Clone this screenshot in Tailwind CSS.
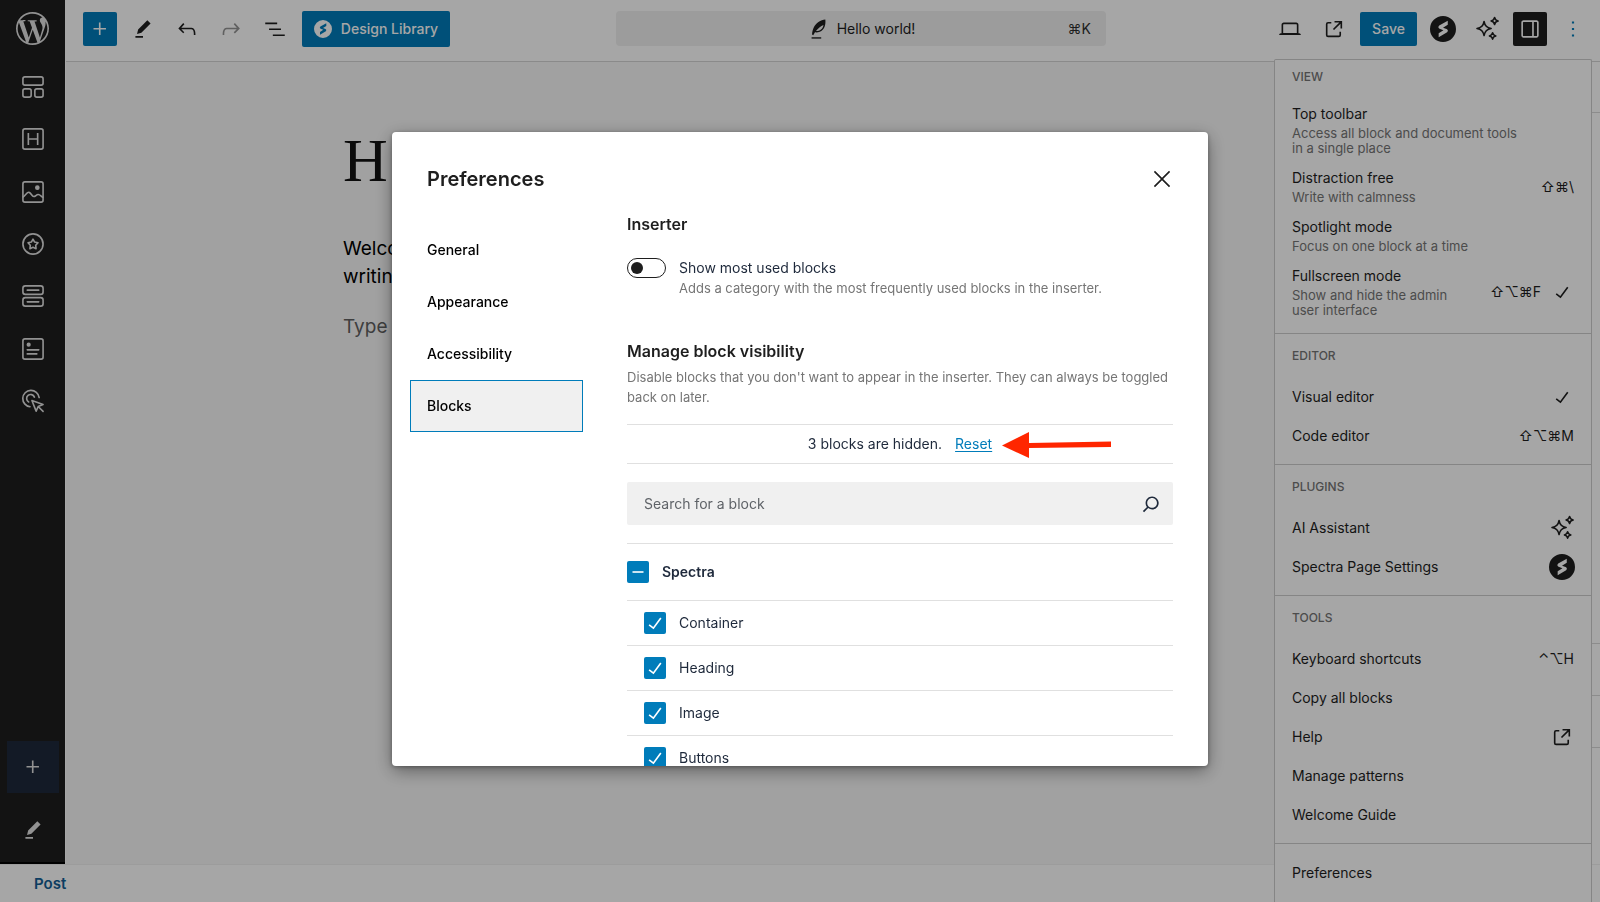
<!DOCTYPE html>
<html lang="en">
<head>
<meta charset="utf-8">
<title>Hello world! – Edit Post</title>
<script src="https://cdn.jsdelivr.net/npm/@tailwindcss/browser@4"></script>
</head>
<body class="h-screen overflow-hidden bg-white font-['Inter','DejaVu_Sans',sans-serif] text-sm text-[#1e1e1e]">

<svg class="hidden" aria-hidden="true">
  <symbol id="plus" viewBox="0 0 24 24"><path d="M11 12.5V17.5H12.5V12.5H17.5V11H12.5V6H11V11H6V12.5H11Z"/></symbol>
  <symbol id="pencil" viewBox="0 0 24 24"><path d="m19 7-3-3-8.5 8.5-1 4 4-1L19 7Zm-7 11.5H5V20h7v-1.5Z"/></symbol>
  <symbol id="external" viewBox="0 0 24 24"><path d="M19.5 4.5h-7V6h4.44l-5.97 5.97 1.06 1.06L18 7.06v4.44h1.5v-7Zm-13 1a2 2 0 0 0-2 2v10a2 2 0 0 0 2 2h10a2 2 0 0 0 2-2v-3H17v3a.5.5 0 0 1-.5.5h-10a.5.5 0 0 1-.5-.5v-10a.5.5 0 0 1 .5-.5h3V5.5h-3Z"/></symbol>
  <symbol id="check" viewBox="0 0 24 24"><path d="M16.7 7.1l-6.3 8.5-3.3-2.5-.9 1.2 4.5 3.4L17.9 8z"/></symbol>
  <symbol id="spectra" viewBox="0 0 24 24"><path fill-rule="evenodd" d="M12 0a12 12 0 1 0 0 24 12 12 0 0 0 0-24ZM16.4 4.3v3.8l-4.4 2.7 3.4 1.3q2 1.1.4 2.9L8 19.7v-3.8l4.4-2.8-3.6-1.4q-2-1.1-.3-2.9Z"/></symbol>
  <symbol id="sparkles" viewBox="0 0 24 24"><path fill="none" stroke="currentColor" stroke-width="1.5" stroke-linejoin="round" d="M8.7 5.2Q9.6 11.1 15.5 12 9.6 12.9 8.7 18.8 7.8 12.9 1.9 12 7.8 11.1 8.7 5.2ZM18.8 1.4Q19.3 4.3 22.2 4.8 19.3 5.3 18.8 8.2 18.3 5.3 15.4 4.8 18.3 4.3 18.8 1.4ZM16.9 16Q17.4 18.6 20 19.1 17.4 19.6 16.9 22.2 16.4 19.6 13.8 19.1 16.4 18.6 16.9 16Z"/></symbol>
</svg>

<div class="flex h-full flex-col">
  <div class="flex min-h-0 flex-1">

    <aside class="flex w-[65px] shrink-0 flex-col items-center border-b-2 border-black bg-[#1e1e1e] text-[#e0e0e0]">
      <a href="#" aria-label="View posts" class="flex h-14 w-full items-center justify-center">
        <svg class="size-[33px]" viewBox="0 0 24 24" fill="currentColor"><path d="M21.469 6.825c.84 1.537 1.318 3.3 1.318 5.175 0 3.979-2.156 7.456-5.363 9.325l3.295-9.527c.615-1.54.82-2.771.82-3.864 0-.405-.026-.78-.07-1.11m-7.981.105c.647-.03 1.232-.105 1.232-.105.582-.075.514-.93-.067-.899 0 0-1.755.135-2.88.135-1.064 0-2.85-.15-2.85-.15-.585-.03-.661.855-.075.885 0 0 .54.061 1.125.09l1.68 4.605-2.37 7.08L5.354 6.9c.649-.03 1.234-.1 1.234-.1.585-.075.516-.93-.065-.896 0 0-1.746.138-2.874.138-.2 0-.438-.008-.69-.015C4.911 3.15 8.235 1.215 12 1.215c2.809 0 5.365 1.072 7.286 2.833-.046-.003-.091-.009-.141-.009-1.06 0-1.812.923-1.812 1.914 0 .89.513 1.643 1.06 2.531.411.72.89 1.643.89 2.977 0 .915-.354 1.994-.821 3.479l-1.075 3.585-3.9-11.61.001.014zM12 22.784c-1.059 0-2.081-.153-3.048-.437l3.237-9.406 3.315 9.087c.024.053.05.101.078.149-1.12.393-2.325.609-3.582.609M1.211 12c0-1.564.336-3.05.935-4.39L7.29 21.709C3.694 19.96 1.212 16.271 1.211 12M12 0C5.385 0 0 5.385 0 12s5.385 12 12 12 12-5.385 12-12S18.615 0 12 0"/></svg>
      </a>
      <nav aria-label="Quick blocks" class="mt-[5px] flex h-[366px] flex-col justify-between">
        <button type="button" aria-label="Container" class="flex h-[52px] w-[52px] items-center justify-center"><svg class="size-[26px]" viewBox="0 0 24 24" fill="none" stroke="currentColor" stroke-width="1.5"><rect x="2.7" y="2.7" width="18.6" height="7.6" rx="1.8"/><rect x="2.7" y="13.7" width="7.6" height="7.6" rx="1.8"/><rect x="13.7" y="13.7" width="7.6" height="7.6" rx="1.8"/></svg></button>
        <button type="button" aria-label="Heading" class="flex h-[52px] w-[52px] items-center justify-center"><svg class="size-[26px]" viewBox="0 0 24 24" fill="none" stroke="currentColor" stroke-width="1.5"><rect x="2.7" y="2.7" width="18.6" height="18.6" rx="1.8"/><path d="M7.7 6.5v11M16.3 6.5v11M7.7 12h8.6"/></svg></button>
        <button type="button" aria-label="Image" class="flex h-[52px] w-[52px] items-center justify-center"><svg class="size-[26px]" viewBox="0 0 24 24" fill="none" stroke="currentColor" stroke-width="1.5" stroke-linecap="round"><rect x="2.7" y="2.7" width="18.6" height="18.6" rx="1.8"/><path d="M3 16.6C5.500 14.500 6.500 12 8.300 12.300c2 .3 2.500 3.900 4.400 3.900 1.700 0 2.300-1.900 4.100-1.900 1.600 0 2.600 1.500 4.200 2.500"/><circle cx="16" cy="8" r="1.400" fill="currentColor"/></svg></button>
        <button type="button" aria-label="Icon" class="flex h-[52px] w-[52px] items-center justify-center"><svg class="size-[26px]" viewBox="0 0 24 24" fill="none" stroke="currentColor" stroke-width="1.5" stroke-linejoin="round"><circle cx="12" cy="12" r="9.300"/><path d="m12 7.500 1.500 2.700 3.100.7-2.100 2.300.3 3.100-2.800-1.200-2.800 1.200.3-3.100-2.100-2.300 3.100-.7Z"/></svg></button>
        <button type="button" aria-label="Buttons" class="flex h-[52px] w-[52px] items-center justify-center"><svg class="size-[26px]" viewBox="0 0 24 24" fill="none" stroke="currentColor" stroke-width="1.5" stroke-linecap="round"><rect x="2.700" y="2.700" width="18.600" height="7.800" rx="2.200"/><rect x="2.700" y="13.500" width="18.600" height="7.800" rx="2.200"/><path d="M6.700 6.600h10.600M6.700 17.400h10.600"/></svg></button>
        <button type="button" aria-label="Info box" class="flex h-[52px] w-[52px] items-center justify-center"><svg class="size-[26px]" viewBox="0 0 24 24" fill="none" stroke="currentColor" stroke-width="1.5" stroke-linecap="round"><rect x="2.700" y="2.700" width="18.600" height="18.600" rx="1.800"/><circle cx="8" cy="8" r="1.200" fill="currentColor"/><path d="M6.700 12.800h10.600M6.700 16.500h8.800"/></svg></button>
        <button type="button" aria-label="Call to action" class="flex h-[52px] w-[52px] items-center justify-center"><svg class="size-[26px]" viewBox="0 0 24 24" fill="none" stroke="currentColor" stroke-width="1.500" stroke-linecap="round" stroke-linejoin="round"><path d="M9.200 17.300a7.600 7.600 0 1 1 8.500-8.500"/><path d="M8 12.900a3.700 3.700 0 1 1 5.300-4.500"/><path d="m11 11.500 10.300 3.700-4.500 1.900-1.900 4.200ZM17 17.300l4.300 4.300"/></svg></button>
      </nav>
      <button type="button" aria-label="Add quick action block" class="mt-auto flex size-[52px] items-center justify-center bg-[#1e293b]"><svg class="size-[26px]" fill="currentColor"><use href="#plus"/></svg></button>
      <button type="button" aria-label="Edit quick action bar" class="mt-3 mb-2 flex size-[49px] items-center justify-center"><svg class="size-[26px]" fill="currentColor"><use href="#pencil"/></svg></button>
    </aside>

    <div class="ml-px flex min-w-0 flex-1 flex-col">
      <header class="flex h-[62px] shrink-0 items-center justify-between border-b border-[#d5d5d5] pr-[9px] pb-1 pl-[17px]">
        <div class="flex items-center gap-2">
          <button type="button" aria-label="Toggle block inserter" class="flex size-[34px] items-center justify-center rounded-xs bg-[#007cba] text-white"><svg class="size-[26px]" fill="currentColor"><use href="#plus"/></svg></button>
          <button type="button" aria-label="Tools" class="flex size-9 items-center justify-center"><svg class="size-[26px]" fill="currentColor"><use href="#pencil"/></svg></button>
          <button type="button" aria-label="Undo" class="flex size-9 items-center justify-center"><svg class="size-[26px]" viewBox="0 0 24 24" fill="currentColor"><path d="M18.300 11.700c-.6-.6-1.400-.9-2.300-.9H6.700l2.900-3.300-1.100-1-4.500 5L8.500 16l1-1-2.700-2.700H16c.5 0 .9.2 1.300.5 1 1 1 3.400 1 4.500v.3h1.500v-.2c0-1.500 0-4.300-1.500-5.700z"/></svg></button>
          <button type="button" aria-label="Redo" class="flex size-9 items-center justify-center text-[#949494]"><svg class="size-[26px]" viewBox="0 0 24 24" fill="currentColor"><path d="M15.600 6.500l-1.100 1 2.900 3.300H8c-.9 0-1.700.3-2.300.9-1.400 1.500-1.400 4.200-1.400 5.600v.2h1.500v-.3c0-1.100 0-3.500 1-4.500.3-.3.700-.5 1.300-.5h9.200L14.500 15l1.100 1.100 4.600-4.600-4.600-5z"/></svg></button>
          <button type="button" aria-label="Document overview" class="flex size-9 items-center justify-center"><svg class="size-[26px]" viewBox="0 0 24 24" fill="currentColor"><path d="M3 6h11v1.500H3V6Zm3.500 5.500h11V13h-11v-1.500ZM21 17H10v1.500h11V17Z"/></svg></button>
          <button type="button" class="ml-px flex h-9 w-[148px] items-center justify-center gap-[9px] rounded-xs bg-[#007cba] font-medium whitespace-nowrap text-white"><svg class="size-[18px]" fill="currentColor"><use href="#spectra"/></svg>Design Library</button>
        </div>

        <button type="button" class="flex h-[35px] w-[490px] items-center rounded bg-[#f0f0f0] px-[15px]">
          <span class="flex-1"></span>
          <span class="flex items-center gap-2"><svg class="size-[22px]" viewBox="0 0 24 24" fill="currentColor"><path fill-rule="evenodd" d="M20 1.500c.6 6-1 11.200-6 13.400-1.800.8-3.800.9-5.300.7L6.800 18.900 5.500 18c.4-6.200 3-11 7-13.600 2.300-1.700 5-2.600 7.500-2.900ZM18 7.500c-3 1.200-6.200 3.700-8.200 6.600 4.600 0 7.300-2 8.200-6.600Z"/><path d="M5 21h10.500v1.500H5z"/></svg>Hello world!</span>
          <span class="flex-1 text-right text-[#2f2f2f]">⌘K</span>
        </button>

        <div class="flex items-center gap-2">
          <button type="button" aria-label="Preview" class="flex size-9 items-center justify-center"><svg class="size-[26px]" viewBox="0 0 24 24" fill="currentColor"><path d="M20.500 16h-.7V8c0-1.100-.9-2-2-2H6.200c-1.100 0-2 .9-2 2v8h-.7c-.8 0-1.500.7-1.500 1.500h20c0-.8-.7-1.500-1.500-1.500zM5.700 8c0-.3.200-.5.500-.5h11.600c.3 0 .5.200.5.500v7.600H5.700V8z"/></svg></button>
          <a href="#" aria-label="View post" class="flex size-9 items-center justify-center"><svg class="size-[26px]" fill="currentColor"><use href="#external"/></svg></a>
          <button type="button" class="h-[34px] w-[57px] rounded-xs bg-[#007cba] font-medium text-white">Save</button>
          <button type="button" aria-label="Spectra Page Settings" class="flex size-9 items-center justify-center"><svg class="size-[26px]" fill="currentColor"><use href="#spectra"/></svg></button>
          <button type="button" aria-label="AI Assistant" class="flex size-9 items-center justify-center"><svg class="size-[25px]"><use href="#sparkles"/></svg></button>
          <button type="button" aria-label="Settings" class="flex size-[34px] items-center justify-center rounded-xs bg-[#1e1e1e] text-white"><svg class="size-[26px]" viewBox="0 0 24 24" fill="currentColor"><path fill-rule="evenodd" d="M18 4H6c-1.100 0-2 .9-2 2v12c0 1.100.9 2 2 2h12c1.100 0 2-.9 2-2V6c0-1.100-.9-2-2-2zm-4 14.500H6c-.3 0-.5-.2-.5-.5V6c0-.3.200-.5.500-.5h8v13zm4.500-.5c0 .3-.2.500-.5.500h-2.500v-13H18c.3 0 .5.200.5.500v12z"/></svg></button>
          <button type="button" aria-label="Options" aria-expanded="true" class="flex size-9 items-center justify-center text-[#007cba]"><svg class="size-[26px]" viewBox="0 0 24 24" fill="currentColor"><path d="M13 19h-2v-2h2v2zm0-6h-2v-2h2v2zm0-6h-2V5h2v2z"/></svg></button>
        </div>
      </header>

      <div class="flex min-h-0 flex-1">
        <main class="min-w-0 flex-1 bg-[#f8f8f8] pt-[60px] text-[19px] text-black">
          <article class="mx-auto w-[654px]">
            <h1 aria-label="Hello world!" class="font-['Liberation_Serif',serif] text-[62px] leading-[76px] text-[#111]">H</h1>
            <p class="mt-[37px] leading-7">Welcome<br>writing</p>
            <p class="mt-[22px] leading-7 text-[#606060]">Type /</p>
          </article>
        </main>
        <aside aria-label="Post settings" class="flex w-[326px] flex-col bg-white">
          <div class="h-[51px] border-b border-[#d8d8d8]"></div>
          <div class="h-[531px] border-b border-[#d8d8d8]"></div>
          <div class="h-[52px] border-b border-[#d8d8d8]"></div>
          <div class="h-[52px] border-b border-[#d8d8d8]"></div>
        </aside>
      </div>
    </div>
  </div>
  <footer class="flex h-[38px] shrink-0 items-center border-t border-[#f0f0f0] px-[34px]">
    <a href="#" class="text-[15px] font-semibold text-[#135e96]">Post</a>
  </footer>
</div>

<!-- Options menu -->
<div role="menu" aria-label="Options" class="absolute top-[59px] right-2 bottom-0 w-[318px] overflow-hidden rounded-t-xs border border-b-0 border-[#ccc] bg-white">
  <section class="pt-1 pb-[9px]">
    <h2 class="mb-2 flex h-[26px] items-center px-[17px] text-xs font-medium text-[#757575]">VIEW</h2>
    <button type="button" role="menuitem" class="flex w-full items-center px-[17px] py-1.5 text-left">
      <span class="flex flex-1 flex-col gap-0.5"><span class="leading-5">Top toolbar</span><span class="text-[13px] leading-[15px] text-[#757575]">Access all block and document tools<br>in a single place</span></span>
    </button>
    <button type="button" role="menuitem" class="flex w-full items-center px-[17px] py-1.5 text-left">
      <span class="flex flex-1 flex-col gap-0.5"><span class="leading-5">Distraction free</span><span class="text-[13px] leading-[15px] text-[#757575]">Write with calmness</span></span>
      <kbd class="font-['Inter','DejaVu_Sans',sans-serif]">⇧⌘\</kbd>
    </button>
    <button type="button" role="menuitem" class="flex w-full items-center px-[17px] py-1.5 text-left">
      <span class="flex flex-1 flex-col gap-0.5"><span class="leading-5">Spotlight mode</span><span class="text-[13px] leading-[15px] text-[#757575]">Focus on one block at a time</span></span>
    </button>
    <button type="button" role="menuitem" class="flex w-full items-center px-[17px] py-1.5 text-left">
      <span class="flex flex-1 flex-col gap-0.5"><span class="leading-5">Fullscreen mode</span><span class="text-[13px] leading-[15px] text-[#757575]">Show and hide the admin<br>user interface</span></span>
      <kbd class="font-['Inter','DejaVu_Sans',sans-serif]">⇧⌥⌘F</kbd>
      <svg class="-mr-px ml-2 size-[26px]" fill="currentColor"><use href="#check"/></svg>
    </button>
  </section>
  <section class="border-t border-[#ccc] py-[9px]">
    <h2 class="mb-2 flex h-[26px] items-center px-[17px] text-xs font-medium text-[#757575]">EDITOR</h2>
    <button type="button" role="menuitem" class="flex h-[39px] w-full items-center justify-between px-[17px]">Visual editor<svg class="-mr-px size-[26px]" fill="currentColor"><use href="#check"/></svg></button>
    <button type="button" role="menuitem" class="flex h-[39px] w-full items-center justify-between px-[17px]">Code editor<kbd class="font-['Inter','DejaVu_Sans',sans-serif]">⇧⌥⌘M</kbd></button>
  </section>
  <section class="border-t border-[#ccc] py-[9px]">
    <h2 class="mb-2 flex h-[26px] items-center px-[17px] text-xs font-medium text-[#757575]">PLUGINS</h2>
    <button type="button" role="menuitem" class="flex h-[39px] w-full items-center justify-between px-[17px]">AI Assistant<svg class="-mr-px size-[25px]"><use href="#sparkles"/></svg></button>
    <button type="button" role="menuitem" class="flex h-[39px] w-full items-center justify-between px-[17px]">Spectra Page Settings<svg class="-mr-px size-[26px]" fill="currentColor"><use href="#spectra"/></svg></button>
  </section>
  <section class="border-t border-[#ccc] py-[9px]">
    <h2 class="mb-2 flex h-[26px] items-center px-[17px] text-xs font-medium text-[#757575]">TOOLS</h2>
    <button type="button" role="menuitem" class="flex h-[39px] w-full items-center justify-between px-[17px]">Keyboard shortcuts<kbd class="font-['Inter','DejaVu_Sans',sans-serif]">⌃⌥H</kbd></button>
    <button type="button" role="menuitem" class="flex h-[39px] w-full items-center justify-between px-[17px]">Copy all blocks</button>
    <a href="#" role="menuitem" class="flex h-[39px] w-full items-center justify-between px-[17px]">Help<svg class="-mr-px size-[26px]" fill="currentColor"><use href="#external"/></svg></a>
    <a href="#" role="menuitem" class="flex h-[39px] w-full items-center justify-between px-[17px]">Manage patterns</a>
    <button type="button" role="menuitem" class="flex h-[39px] w-full items-center justify-between px-[17px]">Welcome Guide</button>
  </section>
  <section class="border-t border-[#ccc] py-[9px]">
    <button type="button" role="menuitem" class="flex h-[39px] w-full items-center justify-between px-[17px]">Preferences</button>
  </section>
</div>

<!-- Preferences dialog -->
<div class="fixed inset-0 flex items-center justify-center bg-black/35 pb-1">
  <div role="dialog" aria-modal="true" aria-labelledby="prefs-title" class="flex h-[634px] max-h-full w-[816px] max-w-full flex-col overflow-hidden rounded bg-white shadow-[0_5px_18px_rgba(0,0,0,0.4),0_1px_4px_rgba(0,0,0,0.3)]">
    <div class="flex h-[79px] shrink-0 items-center justify-between pt-[14px] pr-[33px] pl-[35px]">
      <h1 id="prefs-title" class="text-xl font-semibold">Preferences</h1>
      <button type="button" aria-label="Close"><svg class="size-[26px]" viewBox="0 0 24 24" fill="currentColor"><path d="m13.060 12 6.470-6.470-1.060-1.060L12 10.940 5.530 4.470 4.470 5.530 10.940 12l-6.470 6.470 1.060 1.060L12 13.060l6.470 6.470 1.060-1.060L13.060 12Z"/></svg></button>
    </div>
    <div class="flex min-h-0 flex-1 pr-[35px] pl-[18px]">
      <div role="tablist" aria-orientation="vertical" class="mr-11 flex w-[173px] shrink-0 flex-col pt-[13px] font-medium text-black">
        <button type="button" role="tab" class="h-[52px] px-[17px] text-left">General</button>
        <button type="button" role="tab" class="h-[52px] px-[17px] text-left">Appearance</button>
        <button type="button" role="tab" class="h-[52px] px-[17px] text-left">Accessibility</button>
        <button type="button" role="tab" aria-selected="true" class="h-[52px] border border-[#007cba] bg-[#f0f0f0] px-4 text-left">Blocks</button>
      </div>
      <div role="tabpanel" class="min-w-0 flex-1 text-[#1e293b]">
        <h2 class="mt-[3px] text-base leading-5 font-semibold text-[#1e1e1e]">Inserter</h2>
        <div class="mt-6 flex gap-[13px]">
          <input id="most-used" type="checkbox" role="switch" aria-describedby="most-used-help" class="h-5 w-[39px] shrink-0 appearance-none rounded-full border border-[#1e1e1e] bg-white before:mt-[3px] before:ml-[3px] before:block before:size-3 before:rounded-full before:bg-[#1e1e1e] before:content-['']">
          <div>
            <label for="most-used" class="block leading-5">Show most used blocks</label>
            <p id="most-used-help" class="text-[13px] leading-5 text-[#757575]">Adds a category with the most frequently used blocks in the inserter.</p>
          </div>
        </div>
        <h2 class="mt-[43px] text-base leading-5 font-semibold text-[#1e1e1e]">Manage block visibility</h2>
        <p class="mt-[6px] text-[13px] leading-5 text-[#757575]">Disable blocks that you don't want to appear in the inserter. They can always be toggled<br>back on later.</p>
        <div class="relative mt-[17px] flex h-10 items-center justify-center gap-[13px] border-y border-[#e0e0e0]">
          3 blocks are hidden.
          <button type="button" class="text-[#007cba] underline underline-offset-2">Reset</button>
          <svg class="absolute top-[7px] left-[375px] h-[26px] w-[109px]" viewBox="0 0 109 26" fill="#ff2600" aria-hidden="true"><path d="M0 13.500 27 0v11L109 9.500v5.500L27 16v10Z"/></svg>
        </div>
        <div class="mt-[18px] flex h-[43px] items-center rounded-xs bg-[#f0f0f0] pr-[9px] pl-[17px]">
          <input type="search" aria-label="Search for a block" placeholder="Search for a block" class="min-w-0 flex-1 bg-transparent outline-none placeholder:text-[#5f6368]">
          <svg class="size-[26px]" viewBox="0 0 24 24" fill="currentColor"><path d="M13 5c-3.300 0-6 2.700-6 6 0 1.400.5 2.700 1.300 3.700l-3.800 3.800 1.100 1.100 3.800-3.800c1 .8 2.300 1.300 3.700 1.300 3.300 0 6-2.700 6-6S16.300 5 13 5zm0 10.500c-2.500 0-4.500-2-4.500-4.500s2-4.500 4.500-4.500 4.500 2 4.500 4.500-2 4.500-4.500 4.500z"/></svg>
        </div>
        <fieldset class="mt-[18px] border-t border-[#e0e0e0]">
          <div class="flex h-14 items-center gap-[13px]">
            <span class="grid"><input id="b-spectra" type="checkbox" class="col-start-1 row-start-1 size-[22px] appearance-none rounded-xs bg-[#007cba]"><svg class="pointer-events-none col-start-1 row-start-1 size-[22px]" viewBox="0 0 22 22" fill="#fff"><path d="M5.500 10.200h11v1.600h-11z"/></svg></span>
            <label for="b-spectra" class="font-semibold">Spectra</label>
          </div>
          <ul>
            <li class="flex h-[45px] items-center gap-[13px] border-t border-[#e0e0e0] pl-[17px]">
              <span class="grid"><input id="b-container" type="checkbox" checked class="col-start-1 row-start-1 size-[22px] appearance-none rounded-xs bg-[#007cba]"><svg class="pointer-events-none col-start-1 row-start-1 size-[22px]" viewBox="2 2 20 20" fill="#fff"><use href="#check" x="0" y="0" width="24" height="24"/></svg></span>
              <label for="b-container">Container</label>
            </li>
            <li class="flex h-[45px] items-center gap-[13px] border-t border-[#e0e0e0] pl-[17px]">
              <span class="grid"><input id="b-heading" type="checkbox" checked class="col-start-1 row-start-1 size-[22px] appearance-none rounded-xs bg-[#007cba]"><svg class="pointer-events-none col-start-1 row-start-1 size-[22px]" viewBox="2 2 20 20" fill="#fff"><use href="#check" x="0" y="0" width="24" height="24"/></svg></span>
              <label for="b-heading">Heading</label>
            </li>
            <li class="flex h-[45px] items-center gap-[13px] border-t border-[#e0e0e0] pl-[17px]">
              <span class="grid"><input id="b-image" type="checkbox" checked class="col-start-1 row-start-1 size-[22px] appearance-none rounded-xs bg-[#007cba]"><svg class="pointer-events-none col-start-1 row-start-1 size-[22px]" viewBox="2 2 20 20" fill="#fff"><use href="#check" x="0" y="0" width="24" height="24"/></svg></span>
              <label for="b-image">Image</label>
            </li>
            <li class="flex h-[45px] items-center gap-[13px] border-t border-[#e0e0e0] pl-[17px]">
              <span class="grid"><input id="b-buttons" type="checkbox" checked class="col-start-1 row-start-1 size-[22px] appearance-none rounded-xs bg-[#007cba]"><svg class="pointer-events-none col-start-1 row-start-1 size-[22px]" viewBox="2 2 20 20" fill="#fff"><use href="#check" x="0" y="0" width="24" height="24"/></svg></span>
              <label for="b-buttons">Buttons</label>
            </li>
          </ul>
        </fieldset>
      </div>
    </div>
  </div>
</div>
</body>
</html>
